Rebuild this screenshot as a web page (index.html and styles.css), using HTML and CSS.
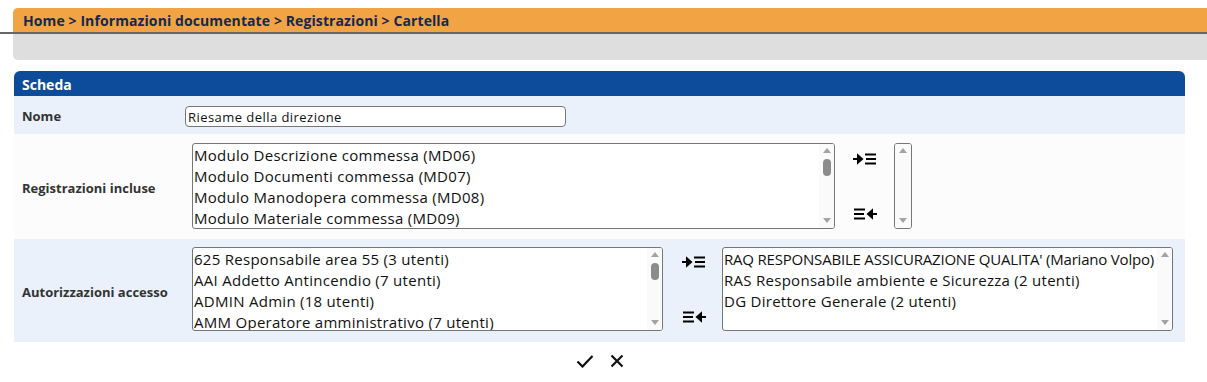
FILE: index.html
```html
<!DOCTYPE html>
<html lang="it">
  <head>
    <meta charset="UTF-8" />
    <title>Cartella</title>
    <link rel="stylesheet" href="styles.css">
  </head>
  <body>
    <div class="crumbs">
      Home &gt; Informazioni documentate &gt; Registrazioni &gt; Cartella
    </div>
    <div class="toolbar"></div>

    <div class="card">
      <div class="card-head">Scheda</div>

      <div class="row alt">
        <div class="label">Nome</div>
        <div class="field">
          <input type="text" class="name-input" value="Riesame della direzione" />
        </div>
      </div>

      <div class="row">
        <div class="label">Registrazioni incluse</div>
        <div class="field pick pick-reg">
          <div class="listbox wide">
            <select multiple size="4" class="list">
              <option>Modulo Descrizione commessa (MD06)</option>
              <option>Modulo Documenti commessa (MD07)</option>
              <option>Modulo Manodopera commessa (MD08)</option>
              <option>Modulo Materiale commessa (MD09)</option>
              <option>Modulo Ordini commessa (MD10)</option>
              <option>Modulo Pianificazione commessa (MD11)</option>
              <option>Modulo Riesame commessa (MD12)</option>
            </select>
            <div class="sbar">
              <span class="arrow up"></span>
              <span class="thumb"></span>
              <span class="arrow down"></span>
            </div>
          </div>
          <div class="movers">
            <button class="mover" title="Aggiungi">
              <svg width="24" height="12" viewBox="0 0 24 12"><path d="M0 6h8M5 2.5l4 3.5-4 3.5z" stroke="#000" stroke-width="2" fill="#000"/><path d="M12 1.5h11M13 6h10M12 10.5h11" stroke="#000" stroke-width="2"/></svg>
            </button>
            <button class="mover" title="Rimuovi">
              <svg width="24" height="12" viewBox="0 0 24 12"><path d="M1 1.5h11M1 6h10M1 10.5h11" stroke="#000" stroke-width="2"/><path d="M24 6h-8M19 2.5l-4 3.5 4 3.5z" stroke="#000" stroke-width="2" fill="#000"/></svg>
            </button>
          </div>
          <div class="listbox empty">
            <div class="sbar">
              <span class="arrow up"></span>
              <span class="arrow down"></span>
            </div>
          </div>
        </div>
      </div>

      <div class="row alt">
        <div class="label">Autorizzazioni accesso</div>
        <div class="field pick pick-aut">
          <div class="listbox left">
            <select multiple size="4" class="list">
              <option>625 Responsabile area 55 (3 utenti)</option>
              <option>AAI Addetto Antincendio (7 utenti)</option>
              <option>ADMIN Admin (18 utenti)</option>
              <option>AMM Operatore amministrativo (7 utenti)</option>
              <option>AQ Addetto qualità (2 utenti)</option>
              <option>CAN Capo cantiere (5 utenti)</option>
              <option>MAG Magazziniere (3 utenti)</option>
            </select>
            <div class="sbar">
              <span class="arrow up"></span>
              <span class="thumb"></span>
              <span class="arrow down"></span>
            </div>
          </div>
          <div class="movers">
            <button class="mover" title="Aggiungi">
              <svg width="24" height="12" viewBox="0 0 24 12"><path d="M0 6h8M5 2.5l4 3.5-4 3.5z" stroke="#000" stroke-width="2" fill="#000"/><path d="M12 1.5h11M13 6h10M12 10.5h11" stroke="#000" stroke-width="2"/></svg>
            </button>
            <button class="mover" title="Rimuovi">
              <svg width="24" height="12" viewBox="0 0 24 12"><path d="M1 1.5h11M1 6h10M1 10.5h11" stroke="#000" stroke-width="2"/><path d="M24 6h-8M19 2.5l-4 3.5 4 3.5z" stroke="#000" stroke-width="2" fill="#000"/></svg>
            </button>
          </div>
          <div class="listbox right">
            <select multiple size="4" class="list">
              <option class="caps">RAQ RESPONSABILE ASSICURAZIONE QUALITA' (Mariano Volpo)</option>
              <option>RAS Responsabile ambiente e Sicurezza (2 utenti)</option>
              <option>DG Direttore Generale (2 utenti)</option>
            </select>
            <div class="sbar">
              <span class="arrow up"></span>
              <span class="arrow down"></span>
            </div>
          </div>
        </div>
      </div>

      <div class="actions">
        <button class="act" title="Salva">
          <svg width="18" height="14" viewBox="0 0 18 14"><path d="M1.5 7.5l5 5L16.5 2" stroke="#111" stroke-width="2.2" fill="none"/></svg>
        </button>
        <button class="act" title="Annulla">
          <svg width="14" height="14" viewBox="0 0 14 14"><path d="M1.5 1.5l11 11M12.5 1.5l-11 11" stroke="#111" stroke-width="2.2" fill="none"/></svg>
        </button>
      </div>
    </div>
  </body>
</html>
```

FILE: styles.css
```css
body {
  margin: 8px 0 0 0;
  background: #fff;
  font-family: "Open Sans", "Noto Sans", sans-serif;
  color: #222;
}

.crumbs {
  margin-left: 13px;
  height: 24px;
  line-height: 25px;
  padding-left: 10px;
  background: #f2a444;
  border-top-left-radius: 5px;
  color: #152752;
  font-weight: 700;
  font-size: 14px;
  letter-spacing: 0.1px;
}

.toolbar {
  height: 26px;
  margin-left: 13px;
  background: #dedede;
  border-top: 2px solid #666;
  border-bottom-left-radius: 5px;
  position: relative;
}

.toolbar::before {
  content: "";
  position: absolute;
  left: -13px;
  top: -2px;
  width: 13px;
  height: 2px;
  background: #666;
}

.card {
  margin: 11px 22px 0 14px;
}

.card-head {
  height: 25px;
  line-height: 27px;
  padding-left: 8px;
  background: #0d4c9b;
  color: #fff;
  font-weight: 700;
  font-size: 14px;
  border-radius: 6px 6px 0 0;
}

.row {
  display: grid;
  grid-template-columns: 171px 1fr;
  align-items: center;
  background: #fcfcfc;
}

.row.alt {
  background: #eaf1fa;
}

.label {
  padding-left: 8px;
  padding-top: 2px;
  font-weight: 700;
  font-size: 13px;
  color: #333;
}

.field {
  padding: 10px 0 7px;
}

.name-input {
  display: block;
  box-sizing: border-box;
  width: 381px;
  height: 21px;
  margin: 0;
  padding: 0 2px;
  border: 1px solid #767676;
  border-radius: 4px;
  background: #fff;
  font: 13px "Open Sans", "Noto Sans", sans-serif;
  letter-spacing: 0.45px;
  color: #111;
}

.pick {
  display: flex;
  align-items: center;
  padding-left: 7px;
}

.pick-reg {
  padding-top: 9px;
  padding-bottom: 10px;
}

.pick-aut {
  padding-top: 8px;
  padding-bottom: 11px;
}

.listbox {
  display: flex;
  box-sizing: border-box;
  height: 86px;
  border: 1px solid #767676;
  border-radius: 3px;
  background: #fff;
  overflow: hidden;
}

.pick-aut .listbox {
  height: 84px;
}

.wide {
  width: 643px;
}

.left {
  width: 471px;
}

.right {
  width: 451px;
}

.empty {
  width: 18px;
}

.list {
  flex: 1;
  min-width: 0;
  height: 100%;
  margin: 0;
  padding: 0;
  border: none;
  outline: none;
  overflow: hidden;
  background: transparent;
  font: 15px "Open Sans", "Noto Sans", sans-serif;
  letter-spacing: 0.28px;
  color: #111;
}

.list option {
  padding: 1px 0 0 1px;
}

.list option.caps {
  letter-spacing: -0.2px;
}

.sbar {
  display: flex;
  flex-direction: column;
  align-items: center;
  width: 15px;
  flex-shrink: 0;
  padding: 4px 0 5px;
  background: #fafafa;
}

.empty .sbar {
  width: 16px;
}

.arrow {
  width: 0;
  height: 0;
  border-left: 4px solid transparent;
  border-right: 4px solid transparent;
}

.arrow.up {
  border-bottom: 5px solid #a3a3a3;
}

.arrow.down {
  margin-top: auto;
  border-top: 5px solid #a3a3a3;
}

.thumb {
  width: 8px;
  height: 17px;
  margin-top: 6px;
  border-radius: 4px;
  background: #8c8c8c;
}

.movers {
  display: flex;
  flex-direction: column;
  justify-content: space-between;
  height: 67px;
}

.pick-reg .movers {
  padding: 0 17px 0 18px;
}

.pick-aut .movers {
  padding: 0 16px 0 19px;
}

.mover {
  padding: 0;
  border: none;
  background: transparent;
  line-height: 0;
  cursor: pointer;
}

.actions {
  display: flex;
  justify-content: center;
  gap: 16px;
  padding: 12px 0 10px;
}

.act {
  padding: 0;
  border: none;
  background: transparent;
  line-height: 0;
  cursor: pointer;
}
```
